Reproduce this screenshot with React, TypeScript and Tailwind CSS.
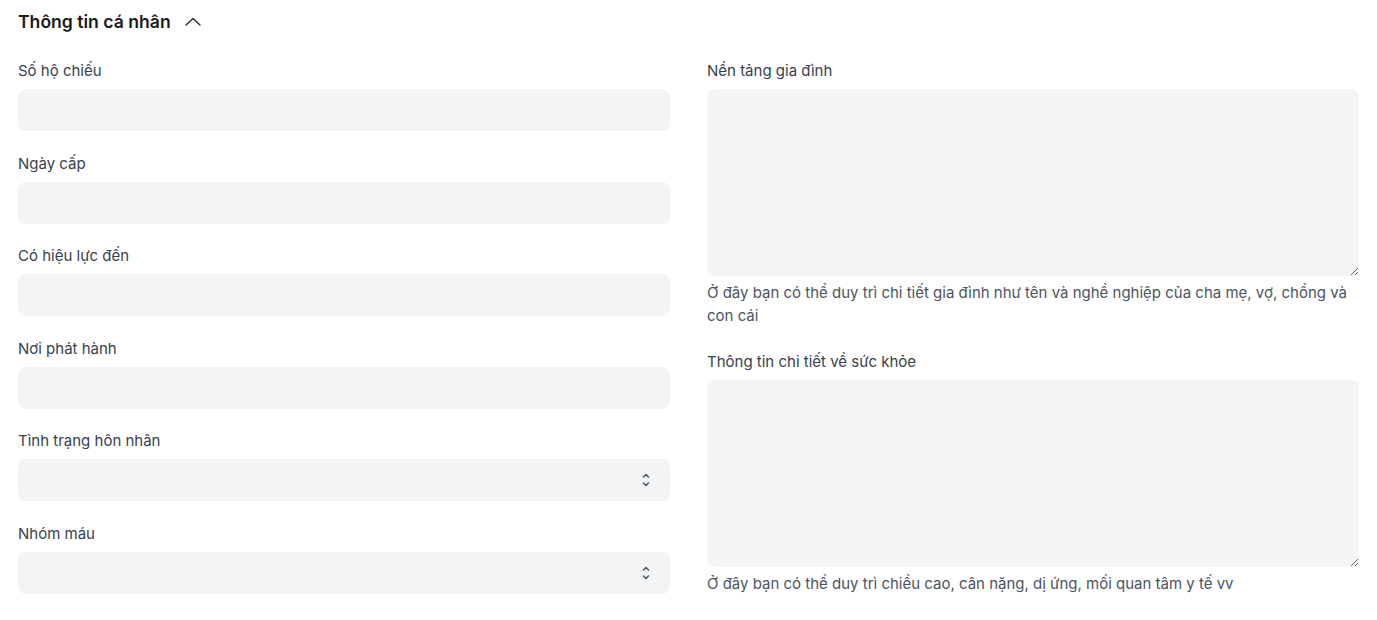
import React from "react";

function Field({ label, select }: { label: string; select?: boolean }) {
  return (
    <div className="flex flex-col">
      <label className="text-[15px] leading-5 text-[#374151] mb-[8px]">{label}</label>
      <div className="relative h-[42px] rounded-lg bg-[#f3f4f6]">
        {select && (
          <svg
            className="absolute right-[19px] top-1/2 -translate-y-1/2"
            width="10"
            height="18"
            viewBox="0 0 10 18"
            fill="none"
            stroke="#4b5563"
            strokeWidth="1.5"
            strokeLinecap="round"
            strokeLinejoin="round"
          >
            <path d="M2.5 6 L5 3.5 L7.5 6" />
            <path d="M2.5 12 L5 14.5 L7.5 12" />
          </svg>
        )}
      </div>
    </div>
  );
}

function AreaField({ label, help }: { label: string; help: string }) {
  return (
    <div className="flex flex-col">
      <label className="text-[15px] leading-5 text-[#374151] mb-[8px]">{label}</label>
      <textarea className="block h-[187px] w-full rounded-lg bg-[#f3f4f6] outline-none resize-y p-3 text-sm" />
      <p className="mt-[5px] text-[15px] leading-[23px] text-[#4b5563]">{help}</p>
    </div>
  );
}

export default function App() {
  return (
    <div
      className="min-h-[620px] bg-white px-[18px] pt-[8px]"
      style={{ fontFamily: "Inter, 'Noto Sans', sans-serif" }}
    >
      <div className="flex items-center h-7">
        <h2 className="text-[17.6px] font-semibold text-[#1a1a1a]">Thông tin cá nhân</h2>
        <svg
          className="ml-[13px]"
          width="18"
          height="12"
          viewBox="0 0 18 12"
          fill="none"
          stroke="#1f2937"
          strokeWidth="1.4"
          strokeLinecap="round"
          strokeLinejoin="round"
        >
          <path d="M2 9 L9 2.5 L16 9" />
        </svg>
      </div>
      <div className="mt-[25px] grid grid-cols-2 gap-x-[37px]">
        <div className="flex flex-col gap-[22.5px]">
          <Field label="Số hộ chiếu" />
          <Field label="Ngày cấp" />
          <Field label="Có hiệu lực đến" />
          <Field label="Nơi phát hành" />
          <Field label="Tình trạng hôn nhân" select />
          <Field label="Nhóm máu" select />
        </div>
        <div className="flex flex-col gap-[24.5px]">
          <AreaField
            label="Nền tảng gia đình"
            help="Ở đây bạn có thể duy trì chi tiết gia đình như tên và nghề nghiệp của cha mẹ, vợ, chồng và con cái"
          />
          <AreaField
            label="Thông tin chi tiết về sức khỏe"
            help="Ở đây bạn có thể duy trì chiều cao, cân nặng, dị ứng, mối quan tâm y tế vv"
          />
        </div>
      </div>
    </div>
  );
}
